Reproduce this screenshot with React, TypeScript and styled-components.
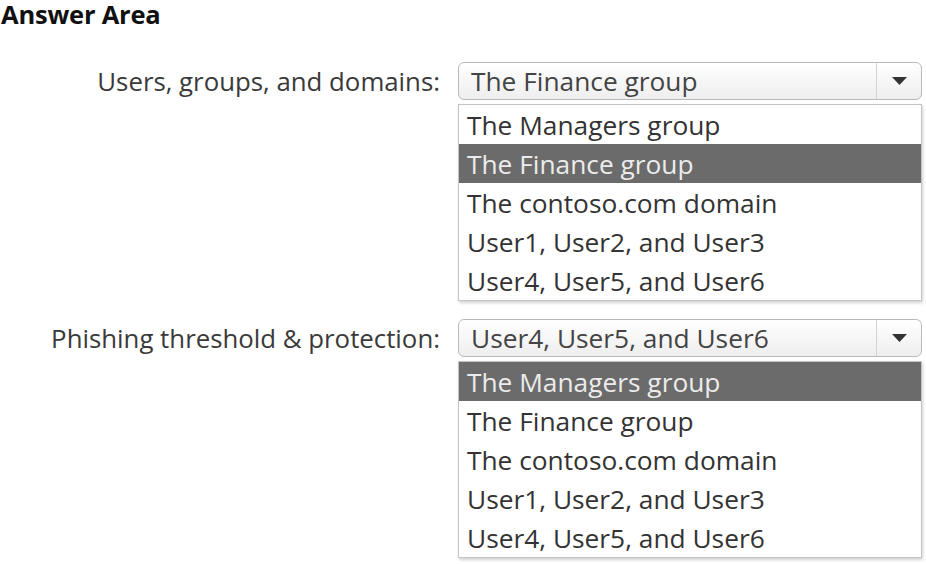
import React from "react";
import styled, { createGlobalStyle } from "styled-components";

const Global = createGlobalStyle`
  html, body { margin: 0; padding: 0; background: #ffffff; }
  body { font-family: "Open Sans", "Noto Sans", sans-serif; color: #333; }
`;

const Page = styled.div`
  width: 926px;
  height: 564px;
  overflow: hidden;
  background: #fff;
  display: flex;
  flex-direction: column;
`;

const Title = styled.h1`
  margin: 0 0 35px 0;
  padding: 1px 0 0 1px;
  height: 26px;
  font-family: "Open Sans", sans-serif;
  font-weight: 700;
  font-size: 25.5px;
  line-height: 26px;
  color: #111;
  letter-spacing: -0.2px;
`;

const Form = styled.div`
  display: grid;
  grid-template-columns: 458px 464px;
  row-gap: 18px;
`;

const Label = styled.div`
  height: 38px;
  display: flex;
  align-items: center;
  justify-content: flex-end;
  padding-right: 18px;
  font-size: 25.8px;
  color: #3a3a3a;
  white-space: nowrap;
`;

const Control = styled.div`
  display: flex;
  flex-direction: column;
  gap: 4px;
`;

const SelectBox = styled.div`
  height: 38px;
  box-sizing: border-box;
  border: 1px solid #b9b9b9;
  border-radius: 6px;
  background: linear-gradient(#ffffff, #eeeeee);
  display: flex;
  align-items: stretch;
`;

const SelectText = styled.div`
  flex: 1;
  display: flex;
  align-items: center;
  padding-left: 12px;
  font-size: 26.3px;
  color: #444;
  white-space: nowrap;
`;

const ArrowCell = styled.div`
  width: 44px;
  border-left: 1px solid #d2d2d2;
  display: flex;
  align-items: center;
  justify-content: center;
`;

const List = styled.div`
  box-sizing: border-box;
  border: 1px solid #c4c4c4;
  background: #fff;
  box-shadow: 1px 2px 3px rgba(0, 0, 0, 0.18);
  display: flex;
  flex-direction: column;
`;

const Item = styled.div<{ $selected?: boolean }>`
  height: 39px;
  display: flex;
  align-items: center;
  padding-left: 8px;
  font-size: 26.3px;
  white-space: nowrap;
  background: ${(p) => (p.$selected ? "#6b6b6b" : "transparent")};
  color: ${(p) => (p.$selected ? "#ececec" : "#333")};
`;

const options = [
  "The Managers group",
  "The Finance group",
  "The contoso.com domain",
  "User1, User2, and User3",
  "User4, User5, and User6",
];

const Arrow = () => (
  <svg width="15" height="8" viewBox="0 0 15 8">
    <polygon points="0,0 15,0 7.5,8" fill="#333" />
  </svg>
);

function Field({ label, value, highlighted }: { label: string; value: string; highlighted: number }) {
  return (
    <>
      <Label>{label}</Label>
      <Control>
        <SelectBox>
          <SelectText>{value}</SelectText>
          <ArrowCell>
            <Arrow />
          </ArrowCell>
        </SelectBox>
        <List>
          {options.map((o, i) => (
            <Item key={o} $selected={i === highlighted}>
              {o}
            </Item>
          ))}
        </List>
      </Control>
    </>
  );
}

export default function App() {
  return (
    <Page>
      <Global />
      <Title>Answer Area</Title>
      <Form>
        <Field label="Users, groups, and domains:" value="The Finance group" highlighted={1} />
        <Field label="Phishing threshold & protection:" value="User4, User5, and User6" highlighted={0} />
      </Form>
    </Page>
  );
}
